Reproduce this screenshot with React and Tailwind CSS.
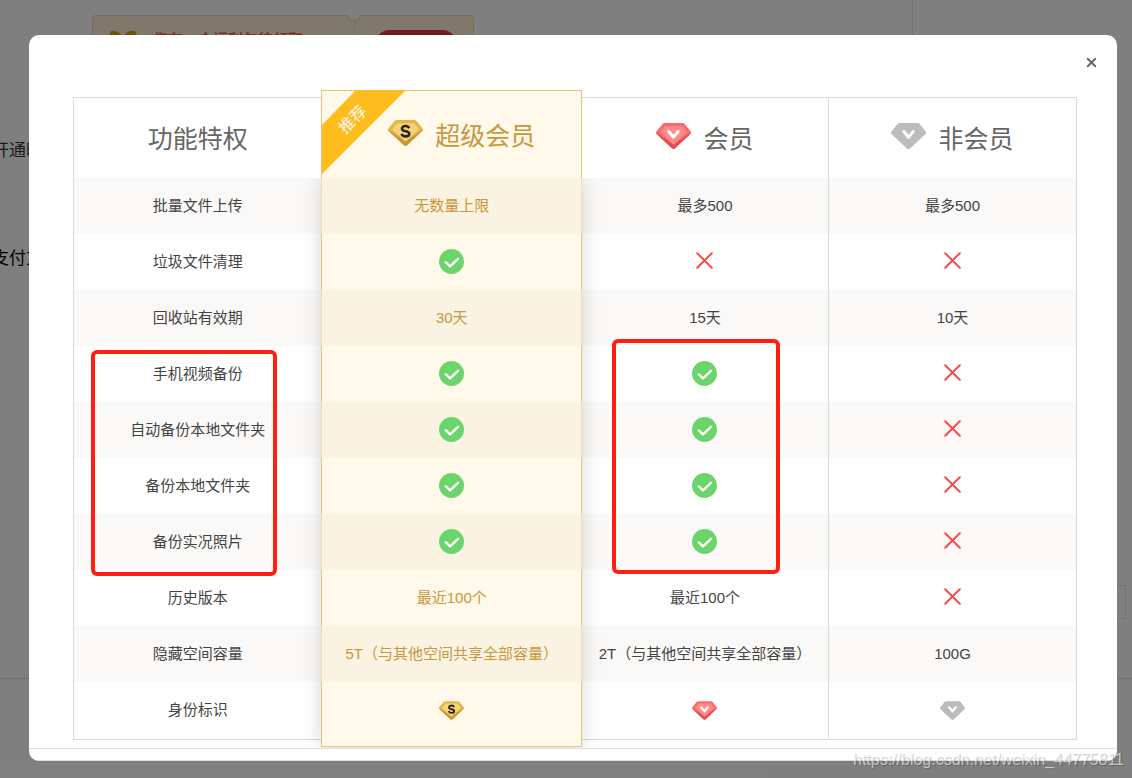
import { X } from "lucide-react";

const GEM_COLORS = {
  gold: { edge: "#c9972f", rim: "#e3b74f", face: "#f8d27a", mark: "#2b2620" },
  red: { edge: "#e84c4f", rim: "#f96b6c", face: "#ff8c8b", mark: "#ffffff" },
  gray: { edge: "#bcbcbc", rim: "#bcbcbc", face: "#bcbcbc", mark: "#ffffff" },
};

const Gem = ({ tone, small }) => {
  const c = GEM_COLORS[tone];
  return (
    <svg
      viewBox="0 0 35 26"
      className={small ? "mx-auto block w-[25px] h-[19px]" : "block w-[35px] h-[26px]"}
      aria-hidden="true"
    >
      <path d="M8.500 0h18.200c.8 0 1.400.3 1.900.9l5.900 7.400c.7.9.6 1.900-.2 2.700L19.100 25.300c-1 .9-2.200.9-3.200 0L.7 11c-.8-.8-.9-1.800-.2-2.700L6.600.9C7.100.3 7.700 0 8.500 0z" fill={c.rim} />
      <path d="M.2 9.600 17.500 21.500 34.800 9.600c0 .5-.2 1-.6 1.400L19.100 25.300c-1 .9-2.200.9-3.200 0L.7 11c-.3-.4-.5-.9-.5-1.400z" fill={c.edge} />
      <path d="M9.300 3.200h16.400l5 6.100-13.200 12.300L4.300 9.300z" fill={c.face} />
      {tone === "gold" ? (
        <path d="M21.200 8.200c-.7-1.500-2-2.200-3.700-2.200-2 0-3.500 1-3.500 2.700 0 3.600 7.300 1.500 7.300 5 0 1.700-1.600 2.700-3.700 2.700-2 0-3.500-.9-4.100-2.500" fill="none" stroke={c.mark} strokeWidth="2.600" />
      ) : (
        <path d="m12.800 8.500 4.700 5.700 4.700-5.700" fill="none" stroke={c.mark} strokeWidth="3" strokeLinecap="round" strokeLinejoin="round" />
      )}
    </svg>
  );
};

const Yes = () => (
  <svg viewBox="0 0 25 25" className="mx-auto mb-0.5 block w-[25px] h-[25px]" role="img" aria-label="支持">
    <circle cx="12.5" cy="12.5" r="12.5" fill="#6bd56b" />
    <path d="m6.800 13.400 4.200 4 8-7.600" fill="none" stroke="#fff" strokeWidth="2.400" strokeLinecap="round" strokeLinejoin="round" />
  </svg>
);

const No = () => (
  <svg viewBox="0 0 17 17" className="mx-auto mb-1 block w-[17px] h-[17px]" role="img" aria-label="不支持">
    <path d="m1.200 1.200 14.600 14.600M15.800 1.200 1.200 15.800" fill="none" stroke="#fb4a50" strokeWidth="2" strokeLinecap="round" />
  </svg>
);

const rows = [
  ["批量文件上传", "无数量上限", "最多500", "最多500"],
  ["垃圾文件清理", true, false, false],
  ["回收站有效期", "30天", "15天", "10天"],
  ["手机视频备份", true, true, false],
  ["自动备份本地文件夹", true, true, false],
  ["备份本地文件夹", true, true, false],
  ["备份实况照片", true, true, false],
  ["历史版本", "最近100个", "最近100个", false],
  ["隐藏空间容量", "5T（与其他空间共享全部容量）", "2T（与其他空间共享全部容量）", "100G"],
  ["身份标识", <Gem tone="gold" small />, <Gem tone="red" small />, <Gem tone="gray" small />],
];

const Cell = ({ value }) => {
  if (value === true) return <Yes />;
  if (value === false) return <No />;
  return value;
};

const PlanTitle = ({ tone, children }) => (
  <div className="flex items-center justify-center gap-3">
    <span className="pb-1.5">
      <Gem tone={tone} />
    </span>
    {children}
  </div>
);

const PrivilegeTable = () => (
  <div className="relative isolate border border-[#d9d9d9] pb-px">
    {/* highlighted column, sits between the row stripes and the cell contents */}
    <div className="absolute top-20 -bottom-2 left-[24.7%] w-[26%] shadow-[0_0_20px_rgba(0,0,0,0.16)]" />
    <div className="absolute z-20 -top-2 -bottom-2 left-[24.7%] w-[26%] border border-[#e6c27a] bg-[#fff9eb]" />
    <table className="w-full table-fixed border-collapse text-center text-[15px] leading-5 text-[#444]">
      <colgroup>
        <col className="w-[24.7%]" />
        <col className="w-[26%]" />
        <col className="w-[24.6%]" />
        <col className="w-[24.7%]" />
      </colgroup>
      <thead>
        <tr className="h-20 text-[25px] leading-8 text-[#666]">
          <th scope="col" className="relative z-10 bg-white p-0 pt-0.5 font-normal">功能特权</th>
          <th scope="col" className="relative z-30 p-0 pt-0.5 font-normal text-[#c9973c]">
            <svg viewBox="0 0 84 84" className="absolute -top-2 left-px w-[84px] h-[84px]" aria-hidden="true">
              <path d="M34 0h50L0 84V35z" fill="#ffbc1e" />
            </svg>
            <span className="absolute top-3 left-4 -rotate-45 text-base leading-5 text-[#fff9eb]">推荐</span>
            <div className="pb-1.5 pl-5">
              <PlanTitle tone="gold">超级会员</PlanTitle>
            </div>
          </th>
          <th scope="col" className="relative z-10 bg-white p-0 pt-0.5 font-normal">
            <PlanTitle tone="red">会员</PlanTitle>
          </th>
          <th scope="col" className="border-l border-[#d9d9d9] p-0 pt-0.5 font-normal">
            <PlanTitle tone="gray">非会员</PlanTitle>
          </th>
        </tr>
      </thead>
      <tbody>
        {rows.map(([name, top, vip, free]) => (
          <tr key={name} className="group h-14 odd:bg-[#faf9f8]">
            <th scope="row" className="p-0 font-normal">{name}</th>
            <td className="relative z-30 p-0 text-[#c9973c] group-odd:bg-[#f6eedc]/60"><Cell value={top} /></td>
            <td className="p-0"><Cell value={vip} /></td>
            <td className="border-l border-[#d9d9d9] p-0"><Cell value={free} /></td>
          </tr>
        ))}
      </tbody>
    </table>
    {/* marked groups of rows */}
    <div className="absolute z-40 top-[252px] left-[17px] w-[186px] h-[226px] rounded-md border-4 border-[#ff1e10]" />
    <div className="absolute z-40 top-[241px] left-[53.7%] w-[168px] h-[235px] rounded-md border-4 border-[#ff1e10]" />
  </div>
);

const Coupon = () => (
  <div className="relative flex h-20 w-[382px] rounded border border-[#f5d3b0] bg-[#fff1d6]">
    <div className="flex w-[262px] gap-4 border-r border-dashed border-[#f5d3b0] pt-3 pl-4">
      <svg viewBox="0 0 28 24" className="mt-[3px] w-7 h-6" aria-hidden="true">
        <path d="M14 11C12 5 8 1 3 2c-2 4 3 9 11 9zM14 11c2-6 6-10 11-9 2 4-3 9-11 9z" fill="none" stroke="#dda70d" strokeWidth="4" strokeLinejoin="round" />
      </svg>
      <p className="text-[15px] font-bold text-[#fc6030]">您有一个福利包待领取</p>
    </div>
    <div className="flex flex-1 justify-center pt-3.5 pl-1">
      <span className="h-8 w-[84px] rounded-full bg-[#e6353d]" />
    </div>
    <span className="absolute -top-px left-[254px] h-1.5 w-3.5 rounded-b-full border border-t-0 border-[#f5d3b0] bg-white" />
  </div>
);

// page that stays visible around the dialog
const Backdrop = () => (
  <div className="absolute inset-0 overflow-hidden bg-white text-[17px] leading-6 text-black">
    <div className="flex h-[679px] border-b border-[#dedede]">
      <div className="flex-1 overflow-hidden pt-[15px]">
        <div className="pl-[92px]">
          <Coupon />
        </div>
        <p className="-ml-2 pt-11 text-[#333]">开通时长</p>
        <p className="-ml-2 pt-21">支付方式</p>
      </div>
      <div className="flex w-[220px] items-end justify-end border-l border-[#e4e4e4] pr-1.5 pb-[59px]">
        <div className="h-[34px] w-40 border border-[#e4e4e4]" />
      </div>
    </div>
    <div className="absolute inset-0 bg-black/50" />
  </div>
);

export default function App() {
  return (
    <div
      className='relative min-h-screen overflow-hidden pt-[35px] pr-[15px] pb-4 pl-[29px] font-["Liberation_Sans","Noto_Sans_CJK_SC",sans-serif]'
      lang="zh-CN"
    >
      <Backdrop />
      <div role="dialog" aria-label="功能特权" className="relative overflow-hidden rounded-[10px] bg-white">
        <div className="flex h-[54px] items-center justify-end pr-[18px]">
          <button type="button" aria-label="关闭" className="text-[#666]">
            <X size={15} strokeWidth={3} />
          </button>
        </div>
        <div className="overflow-hidden border-b border-[#ddd] pt-2 pr-10 pb-2 pl-11">
          <PrivilegeTable />
        </div>
        <div className="h-3 border-b border-[#ddd]" />
      </div>
      <span className="absolute right-2 bottom-2 text-base leading-5 text-white/60 [text-shadow:1px_1px_1px_rgba(0,0,0,0.25)]">
        https://blog.csdn.net/weixin_44775811
      </span>
    </div>
  );
}
